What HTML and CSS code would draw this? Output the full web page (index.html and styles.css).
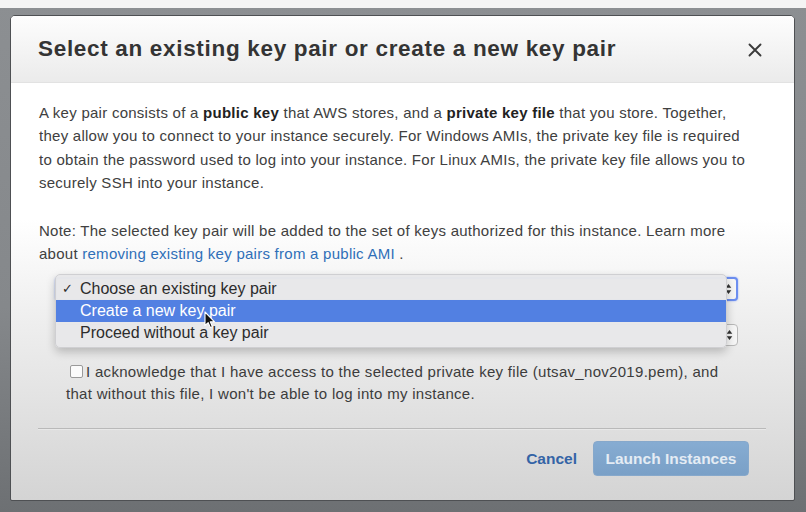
FILE: index.html
```html
<!DOCTYPE html>
<html>
<head>
<meta charset="utf-8">
<link rel="stylesheet" href="styles.css">
</head>
<body>
<div class="topstrip"></div>
<div class="stage">
  <div class="modal">
    <div class="modal-header">
      <h1 class="title">Select an existing key pair or create a new key pair</h1>
      <svg class="close" width="14" height="14" viewBox="0 0 14 14"><path d="M1.5 1.5 L12.5 12.5 M12.5 1.5 L1.5 12.5" stroke="#3a3a3a" stroke-width="1.9" fill="none" stroke-linecap="round"/></svg>
    </div>
    <div class="modal-body">
      <p class="para">A key pair consists of a <b>public key</b> that AWS stores, and a <b>private key file</b> that you store. Together, they allow you to connect to your instance securely. For Windows AMIs, the private key file is required to obtain the password used to log into your instance. For Linux AMIs, the private key file allows you to securely SSH into your instance.</p>
      <p class="para note">Note: The selected key pair will be added to the set of keys authorized for this instance. Learn more about <a class="link">removing existing key pairs from a public AMI</a> .</p>
      <div class="selects">
        <div class="select focus">
          <svg class="arrows" width="7" height="12" viewBox="0 0 7 12"><path d="M3.5 1 L6.3 4.8 L0.7 4.8 Z M3.5 11 L6.3 7.2 L0.7 7.2 Z" fill="#333"/></svg>
        </div>
        <div class="select second">
          <svg class="arrows" width="7" height="12" viewBox="0 0 7 12"><path d="M3.5 1 L6.3 4.8 L0.7 4.8 Z M3.5 11 L6.3 7.2 L0.7 7.2 Z" fill="#333"/></svg>
        </div>
        <ul class="menu">
          <li class="item"><span class="check">✓</span>Choose an existing key pair</li>
          <li class="item active">Create a new key pair</li>
          <li class="item">Proceed without a key pair</li>
        </ul>
        <svg class="cursor" width="12" height="18" viewBox="0 0 12 18"><path d="M1 1 L1 14.5 L4.2 11.6 L6.4 16.6 L8.4 15.7 L6.3 10.8 L10.6 10.8 Z" fill="#111" stroke="#fff" stroke-width="1.1" stroke-linejoin="round"/></svg>
      </div>
      <label class="ack"><span class="checkbox"></span>I acknowledge that I have access to the selected private key file (utsav_nov2019.pem), and that without this file, I won't be able to log into my instance.</label>
    </div>
    <div class="modal-footer">
      <div class="separator"></div>
      <div class="actions">
        <a class="cancel">Cancel</a>
        <button class="launch">Launch Instances</button>
      </div>
    </div>
  </div>
</div>
</body>
</html>
```

FILE: styles.css
```css
html, body {
  margin: 0;
  padding: 0;
}
body {
  width: 806px;
  height: 512px;
  overflow: hidden;
  background: linear-gradient(#8c8f92 0%, #85888b 60%, #6d7073 100%);
  font-family: "Liberation Sans", Arial, sans-serif;
}
.topstrip {
  height: 8px;
  background: #f4f4f4;
}
.stage {
  padding: 7px 0 0 10px;
}
.modal {
  width: 783px;
  height: 484px;
  border: 1px solid #4e5053;
  border-radius: 5px 5px 2px 2px;
  background: linear-gradient(#ffffff 0%, #ffffff 42%, #efefef 62%, #d4d4d4 100%);
  display: flex;
  flex-direction: column;
  overflow: hidden;
}
.modal-header {
  height: 67px;
  flex: none;
  display: flex;
  align-items: center;
  justify-content: space-between;
  padding: 0 32px 0 27px;
  background: linear-gradient(#fdfdfd, #ebebeb);
  border-bottom: 1px solid #e2e2e2;
  box-sizing: border-box;
}
.title {
  margin: 0;
  font-size: 22.5px;
  font-weight: bold;
  color: #343434;
  letter-spacing: 0.68px;
}
.close {
  display: block;
  margin-top: 2px;
}
.modal-body {
  padding: 18px 40px 0 28px;
  color: #404040;
  font-size: 15px;
  letter-spacing: 0.26px;
  line-height: 23.4px;
}
.para {
  margin: 0 0 24px 0;
}
.para b {
  color: #222;
}
.note {
  margin-bottom: 0;
}
.link {
  color: #2f6fb8;
}
.selects {
  position: relative;
  margin: 12px 0 0 16px;
  width: 683px;
  display: flex;
  flex-direction: column;
  gap: 23px;
  letter-spacing: 0;
}
.select {
  height: 23px;
  box-sizing: border-box;
  border: 1px solid #b9b9b9;
  border-radius: 4px;
  background: #f6f6f6;
  display: flex;
  align-items: center;
  justify-content: flex-end;
  padding-right: 4px;
}
.select.focus {
  height: 24px;
  border: 2px solid #6c8ef0;
  box-shadow: 0 0 2px #8fa9f5;
}
.select.second {
  height: 22px;
}
.arrows {
  display: block;
}
.menu {
  position: absolute;
  left: 0;
  top: -3px;
  width: 672px;
  margin: 0;
  padding: 3px 0 4px 0;
  list-style: none;
  background: rgba(232, 232, 234, 0.98);
  border: 1px solid #cfcfd2;
  border-radius: 5px;
  box-shadow: 0 4px 10px rgba(0, 0, 0, 0.22);
  box-sizing: border-box;
}
.item {
  height: 21.6px;
  line-height: 21.6px;
  padding-left: 24px;
  font-size: 16px;
  color: #2c2c2c;
  position: relative;
}
.item.active {
  background: #5280e2;
  color: #fff;
}
.check {
  position: absolute;
  left: 6px;
  top: 0;
  font-size: 13px;
  font-family: "DejaVu Sans", sans-serif;
}
.cursor {
  position: absolute;
  left: 149px;
  top: 34px;
}
.ack {
  display: block;
  margin: 15px 16px 0 27px;
  line-height: 22px;
  font-size: 15px;
  letter-spacing: 0.3px;
  color: #3c3c3c;
}
.checkbox {
  display: inline-block;
  width: 11px;
  height: 11px;
  border: 1px solid #9a9a9a;
  border-radius: 2px;
  background: #fbfbfb;
  vertical-align: -1px;
  margin: 0 3px 0 4px;
}
.modal-footer {
  padding: 23px 28px 0 27px;
}
.separator {
  height: 1px;
  background: #b9b9b9;
  box-shadow: 0 1px 0 #e8e8e8;
}
.actions {
  display: flex;
  justify-content: flex-end;
  align-items: center;
  gap: 16px;
  margin-top: 12px;
  padding-right: 17px;
}
.cancel {
  font-weight: bold;
  font-size: 15.5px;
  color: #3464a6;
}
.launch {
  width: 156px;
  height: 35px;
  border: 1px solid #86a8cb;
  border-radius: 4px;
  background: linear-gradient(#86acd2, #7aa0c7);
  color: #e4ecf4;
  font-family: "Liberation Sans", Arial, sans-serif;
  font-weight: bold;
  font-size: 15.5px;
  padding: 0;
}
```
